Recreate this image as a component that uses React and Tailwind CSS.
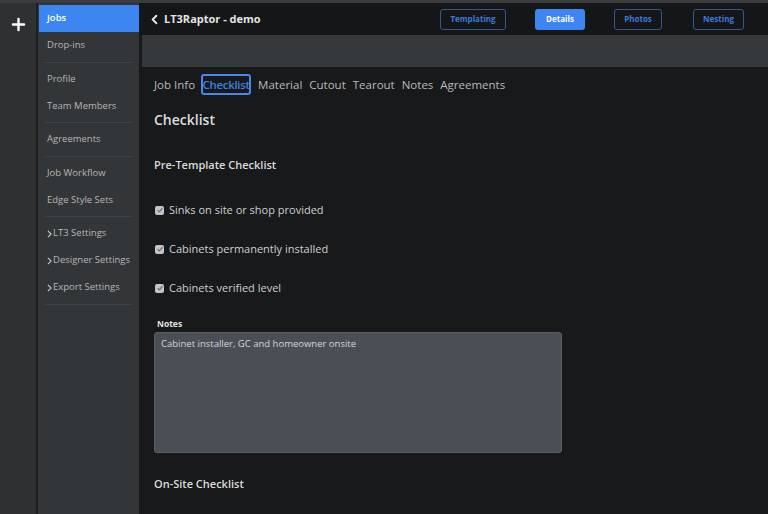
import { ChevronLeft, Plus } from "lucide-react";

const menu = [
  { label: "Jobs", active: true },
  { label: "Drop-ins" },
  "sep",
  { label: "Profile" },
  { label: "Team Members" },
  "sep",
  { label: "Agreements" },
  "sep",
  { label: "Job Workflow" },
  { label: "Edge Style Sets" },
  "sep",
  { label: "LT3 Settings", arrow: true },
  { label: "Designer Settings", arrow: true },
  { label: "Export Settings", arrow: true },
  "sep",
];

const tabs = ["Job Info", "Checklist", "Material", "Cutout", "Tearout", "Notes", "Agreements"];

const topButtons = [
  { label: "Templating", w: "w-[66px]" },
  { label: "Details", w: "ml-[29px] w-[50px]", filled: true },
  { label: "Photos", w: "ml-[29px] w-[48px]" },
  { label: "Nesting", w: "ml-[31px] w-[51px]" },
];

const checks = ["Sinks on site or shop provided", "Cabinets permanently installed", "Cabinets verified level"];

function CheckBox() {
  return (
    <span className="flex h-[9px] w-[9px] items-center justify-center rounded-[2px] bg-[#c3c5c7]">
      <svg viewBox="0 0 10 10" className="h-[8px] w-[8px]">
        <path d="M2 5.2 L4.2 7.4 L8 2.8" fill="none" stroke="#6d7073" strokeWidth="1.6" />
      </svg>
    </span>
  );
}

export default function App() {
  return (
    <div
      className="flex h-[514px] w-[768px] flex-col overflow-hidden bg-[#17191b]"
      style={{ fontFamily: '"Open Sans", "Noto Sans", sans-serif' }}
    >
      <div className="h-[3px] bg-[#3a3c3e]" />
      <div className="flex flex-1">
        {/* rail */}
        <div className="flex w-[38px] flex-col items-center border-r-2 border-[#1d1f21] bg-[#2e3032] pt-[12px]">
          <Plus className="h-[19px] w-[19px] text-white" strokeWidth={3} />
        </div>

        {/* sidebar */}
        <div className="w-[101px] bg-[#333638] pt-[2px]">
          {menu.map((m, i) =>
            m === "sep" ? (
              <div key={i} className="flex h-[6.5px] items-center px-[7px]">
                <div className="h-px w-full bg-[#414447]" />
              </div>
            ) : (
              <div
                key={i}
                className={
                  m.active
                    ? "ml-px flex h-[27px] items-center whitespace-nowrap bg-[#3d85f0] pl-[8px] text-[9.5px] font-semibold text-white"
                    : "flex h-[27px] items-center whitespace-nowrap pl-[9px] text-[9.5px] text-[#b3b5b7]"
                }
              >
                {m.arrow && (
                  <svg viewBox="0 0 6 10" className="mr-[1px] h-[8px] w-[5px] shrink-0">
                    <path d="M1 1 L5 5 L1 9" fill="none" stroke="#c4c6c8" strokeWidth="1.4" />
                  </svg>
                )}
                {m.label}
              </div>
            )
          )}
        </div>

        {/* main */}
        <div className="flex flex-1 flex-col">
          <div className="flex h-[32px] items-center bg-[#141618] pl-[8px] pr-[24px]">
            <ChevronLeft className="h-[15px] w-[15px] text-[#e6e6e6]" strokeWidth={3} />
            <span className="ml-[2px] text-[11px] font-bold text-[#e4e4e4]">LT3Raptor - demo</span>
            <div className="ml-auto flex">
              {topButtons.map((b) => (
                <div
                  key={b.label}
                  className={
                    b.filled
                      ? `${b.w} flex h-[21px] items-center justify-center rounded-[3px] bg-[#3d85f0] text-[8px] font-bold text-white`
                      : `${b.w} flex h-[21px] items-center justify-center rounded-[3px] border border-[#34578c] text-[8px] font-bold text-[#3a7bd9]`
                  }
                >
                  {b.label}
                </div>
              ))}
            </div>
          </div>
          <div className="ml-[3px] h-[32px] bg-[#35383a]" />

          <div className="flex flex-col pl-[15px]">
            <div className="mt-[7px] flex h-[21px] items-center text-[11.5px] text-[#b7b9bb]">
              {tabs.map((t) =>
                t === "Checklist" ? (
                  <span
                    key={t}
                    className="-ml-px mr-[7px] flex h-[21px] w-[50px] items-center justify-center rounded-[3px] border-2 border-[#4a87e6] font-semibold tracking-[-0.3px] text-[#3f7fe0]"
                  >
                    {t}
                  </span>
                ) : (
                  <span key={t} className="mr-[7px]">
                    {t}
                  </span>
                )
              )}
            </div>

            <div className="mt-[15px] text-[14px] font-semibold leading-[20px] text-[#dcdcdc]">Checklist</div>
            <div className="mt-[27px] text-[11px] font-semibold leading-[16px] text-[#dcdcdc]">
              Pre-Template Checklist
            </div>

            <div className="mt-[29px] flex flex-col gap-[23px]">
              {checks.map((c) => (
                <div key={c} className="flex h-[16px] items-center gap-[5px] pl-[1px] text-[11px] text-[#cdcfd1]">
                  <CheckBox />
                  {c}
                </div>
              ))}
            </div>

            <div className="mt-[22px] pl-[3px] text-[8.5px] font-bold leading-[12px] text-[#e2e2e2]">Notes</div>
            <div className="mt-[2px] h-[121px] w-[408px] rounded-[3px] border border-[#5a5f65] bg-[#4a4f55] px-[6px] pt-[4px] text-[9.5px] text-[#d4d6d8]">
              Cabinet installer, GC and homeowner onsite
            </div>

            <div className="mt-[23px] text-[11px] font-semibold leading-[16px] text-[#dcdcdc]">On-Site Checklist</div>
          </div>
        </div>
      </div>
    </div>
  );
}
